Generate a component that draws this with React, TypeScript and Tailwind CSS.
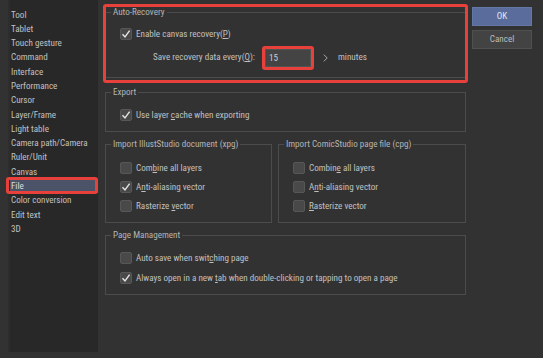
import React from "react";

const items = [
  "Tool",
  "Tablet",
  "Touch gesture",
  "Command",
  "Interface",
  "Performance",
  "Cursor",
  "Layer/Frame",
  "Light table",
  "Camera path/Camera",
  "Ruler/Unit",
  "Canvas",
  "File",
  "Color conversion",
  "Edit text",
  "3D",
];

function Check({ checked }: { checked?: boolean }) {
  return (
    <div className="w-[12px] h-[12px] shrink-0 bg-[#494949] border border-[#575757] rounded-[2px] flex items-center justify-center">
      {checked && (
        <svg width="10" height="10" viewBox="0 0 10 10">
          <path d="M1.5 5.2 L4 8 L8.6 1.6" fill="none" stroke="#e4e4e4" strokeWidth="1.4" />
        </svg>
      )}
    </div>
  );
}

function Row({ checked, children }: { checked?: boolean; children: React.ReactNode }) {
  return (
    <div className="flex items-center h-[12px] gap-[4px]">
      <Check checked={checked} />
      <span className="leading-[12px] whitespace-nowrap">{children}</span>
    </div>
  );
}

function Group({
  title,
  className,
  children,
}: {
  title: string;
  className: string;
  children?: React.ReactNode;
}) {
  return (
    <div className={"relative border border-[#4c4c4c] " + className}>
      <span className="absolute left-[5px] top-[-7px] px-[2px] bg-[#323232] leading-[12px] text-[#b4b4b4] whitespace-nowrap">
        {title}
      </span>
      {children}
    </div>
  );
}

export default function App() {
  return (
    <div className="relative w-[543px] h-[358px] overflow-hidden bg-[#323232] text-[#c0c0c0] text-[9.1px] font-['Roboto_Condensed','Liberation_Sans',Arial,sans-serif] flex">
      {/* Left list */}
      <div className="ml-[8px] w-[90px] h-[352px] bg-[#282828] border-l-2 border-[#2d2d2d] pt-[7.5px]">
        {items.map((it) => (
          <div
            key={it}
            className={
              "h-[14.3px] leading-[14.3px] pl-[1px] whitespace-nowrap " +
              (it === "File" ? "bg-[#4a5367] text-[#dcdcdc]" : "")
            }
          >
            {it}
          </div>
        ))}
      </div>

      {/* Main column */}
      <div className="ml-[7px] w-[361px] flex flex-col pt-[12px]">
        <Group title="Auto-Recovery" className="h-[66px] pt-[15px] pl-[14px]">
          <Row checked>
            Enable canvas recovery(<u className="underline-offset-1">P</u>)
          </Row>
          <div className="flex items-center h-[18px] mt-[9px] -ml-[14px]">
            <div className="w-[150px] text-right whitespace-nowrap pr-[1px]">
              Save recovery data every(<u className="underline-offset-1">Q</u>):
            </div>
            <div className="ml-[9px] w-[46px] h-[18px] bg-[#444444] border border-[#525252] pl-[3px] leading-[16px] text-[#d0d0d0]">
              15
            </div>
            <svg className="ml-[12px]" width="5" height="8" viewBox="0 0 5 8">
              <path d="M0.8 0.6 L4.2 4 L0.8 7.4" fill="none" stroke="#a8a8a8" strokeWidth="1" />
            </svg>
            <span className="ml-[10px]">minutes</span>
          </div>
        </Group>

        <Group title="Export" className="h-[40px] mt-[14px] pt-[16px] pl-[14px]">
          <Row checked>
            Use layer <u className="underline-offset-1">c</u>ache when exporting
          </Row>
        </Group>

        <div className="flex mt-[12px] gap-[6px]">
          <Group title="Import IllustStudio document (xpg)" className="w-[167px] h-[79px] pt-[17px] pl-[14px]">
            <div className="flex flex-col gap-[7px]">
              <Row>
                Com<u className="underline-offset-1">b</u>ine all layers
              </Row>
              <Row checked>
                A<u className="underline-offset-1">n</u>ti-aliasing vector
              </Row>
              <Row>
                Rasterize <u className="underline-offset-1">v</u>ector
              </Row>
            </div>
          </Group>
          <Group title="Import ComicStudio page file (cpg)" className="w-[188px] h-[79px] pt-[17px] pl-[14px]">
            <div className="flex flex-col gap-[7px]">
              <Row>
                Combin<u className="underline-offset-1">e</u> all layers
              </Row>
              <Row>
                A<u className="underline-offset-1">n</u>ti-aliasing vector
              </Row>
              <Row>
                <u className="underline-offset-1">R</u>asterize vector
              </Row>
            </div>
          </Group>
        </div>

        <Group title="Page Management" className="h-[60px] mt-[12px] pt-[16px] pl-[14px]">
          <div className="flex flex-col gap-[8px]">
            <Row>
              Auto save when swit<u className="underline-offset-1">c</u>hing page
            </Row>
            <Row checked>
              Always open in a new <u className="underline-offset-1">t</u>ab when double-clicking or tapping to open a page
            </Row>
          </div>
        </Group>
      </div>

      {/* Buttons */}
      <div className="ml-[6px] w-[60px] flex flex-col pt-[7px] gap-[4px]">
        <button className="h-[19px] bg-[#5a6c9b] border border-[#6577a6] text-[#e0e6f4] leading-[17px]">
          OK
        </button>
        <button className="h-[19px] bg-[#434343] border border-[#505050] text-[#bcbcbc] leading-[17px]">
          Cancel
        </button>
      </div>

      {/* Annotation overlays */}
      <div className="absolute left-[103px] top-[4px] w-[365px] h-[79px] border-[3px] border-[#e8413b] rounded-[3px] pointer-events-none" />
      <div className="absolute left-[262px] top-[46px] w-[52px] h-[24px] border-[3px] border-[#e8413b] rounded-[3px] pointer-events-none" />
      <div className="absolute left-[6px] top-[177px] w-[92px] h-[17px] border-[3px] border-[#e8413b] rounded-[3px] pointer-events-none" />
    </div>
  );
}
